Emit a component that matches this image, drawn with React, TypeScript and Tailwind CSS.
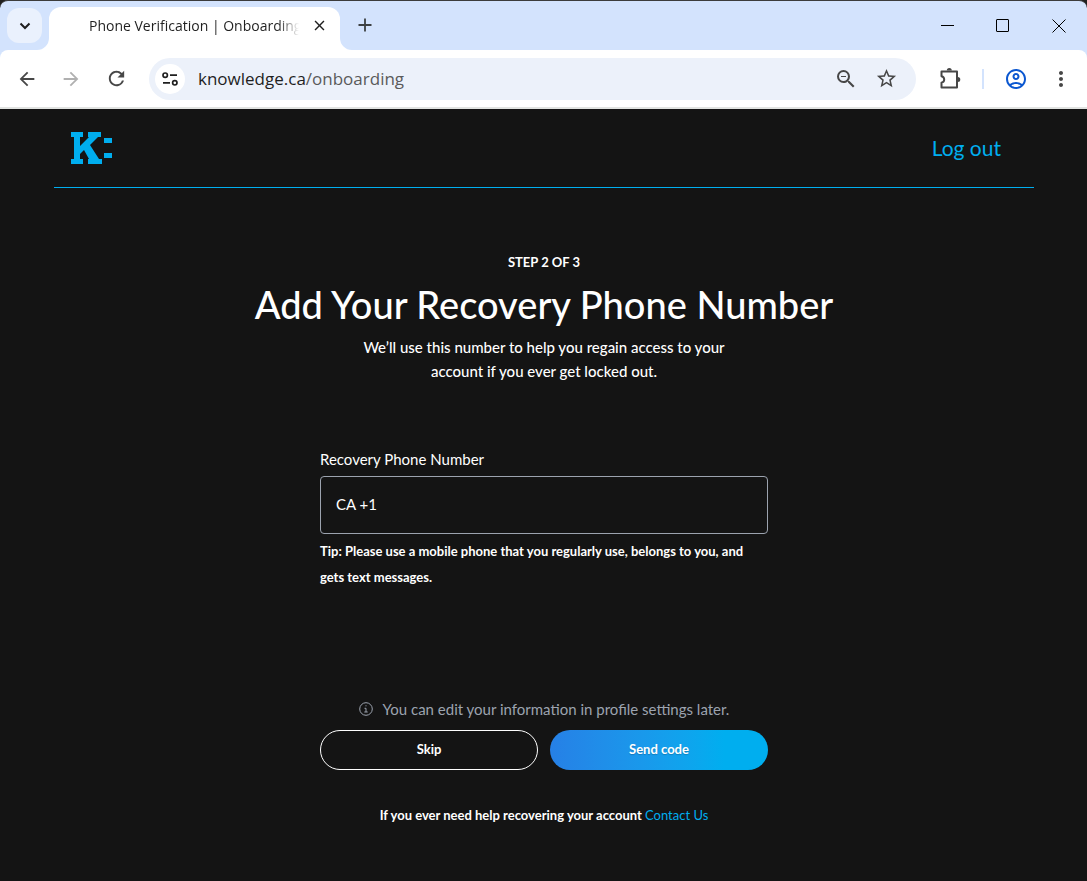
import { ReactNode } from "react";
import {
  MdArrowBack,
  MdArrowForward,
  MdClose,
  MdMoreVert,
  MdOutlineAccountCircle,
  MdOutlineZoomOut,
  MdRefresh,
  MdStarOutline,
} from "react-icons/md";

interface IconButtonProps {
  label: string;
  className?: string;
  children: ReactNode;
}

function IconButton({ label, className = "", children }: IconButtonProps) {
  return (
    <button
      type="button"
      aria-label={label}
      className={`flex shrink-0 items-center justify-center ${className}`}
    >
      {children}
    </button>
  );
}

function TabStrip() {
  return (
    <div className="flex h-[50px] items-start rounded-t-lg border-t border-[#3c3c3c] bg-[#d3e3fd] pl-[7px]">
      <IconButton
        label="Search tabs"
        className="mt-[7px] size-[35px] rounded-xl bg-[#eaf1fd] text-[#1f1f1f]"
      >
        <svg viewBox="0 0 12 8" className="h-[8px] w-[12px]" fill="none">
          <path d="M1.5 1.5 6 6l4.500-4.500" stroke="currentColor" strokeWidth="2" />
        </svg>
      </IconButton>

      {/* Active tab, with the flared corners where it meets the toolbar */}
      <div className="mt-[6px] flex items-end">
        <svg viewBox="0 0 12 12" className="-ml-[5px] size-[12px]" fill="white">
          <path d="M12 0v12H0A12 12 0 0 0 12 0z" />
        </svg>
        <div className="flex h-[43px] w-[291px] items-center rounded-t-xl bg-white pb-[6px] pl-[40px]">
          <div className="w-[210px] overflow-hidden whitespace-nowrap bg-linear-to-r from-[#1f1f1f] from-90% to-transparent bg-clip-text text-[14px] text-transparent">
            Phone Verification | Onboarding
          </div>
          <IconButton label="Close tab" className="ml-[11px] size-[18px] text-[#1f1f1f]">
            <MdClose className="size-[17px]" />
          </IconButton>
        </div>
        <svg viewBox="0 0 12 12" className="size-[12px]" fill="white">
          <path d="M0 0v12h12A12 12 0 0 1 0 0z" />
        </svg>
      </div>

      <IconButton label="New tab" className="mt-[11px] size-[26px] text-[#3c4043]">
        <svg viewBox="0 0 14 14" className="size-[14px]" fill="none">
          <path d="M7 0.500v13M0.500 7h13" stroke="currentColor" strokeWidth="1.800" />
        </svg>
      </IconButton>

      {/* Window controls */}
      <div className="ml-auto flex h-[49px] text-black">
        <IconButton label="Minimize" className="w-[56px]">
          <svg viewBox="0 0 13 13" className="size-[13px]">
            <path d="M0 6.500h13" stroke="currentColor" />
          </svg>
        </IconButton>
        <IconButton label="Maximize" className="w-[56px]">
          <svg viewBox="0 0 14 14" className="size-[14px]" fill="none">
            <rect x="0.500" y="0.500" width="12" height="12" rx="0.500" stroke="currentColor" />
          </svg>
        </IconButton>
        <IconButton label="Close" className="w-[56px]">
          <svg viewBox="0 0 14 14" className="size-[14px]">
            <path d="M0.500 0.500l13 13M13.500 0.500l-13 13" stroke="currentColor" />
          </svg>
        </IconButton>
      </div>
    </div>
  );
}

function Toolbar() {
  return (
    <div className="bg-[#d3e3fd]">
      <div className="flex h-[59px] items-center rounded-t-lg border-b-2 border-[#e1e3e1] bg-white pr-[14px] pl-[16px] text-[#474747]">
        <IconButton label="Back" className="size-[22px]">
          <MdArrowBack className="size-[22px]" />
        </IconButton>
        <IconButton label="Forward" className="ml-[22px] size-[22px] text-[#b0b0b0]">
          <MdArrowForward className="size-[22px]" />
        </IconButton>
        <IconButton label="Reload" className="ml-[23px] size-[23px]">
          <MdRefresh className="size-[23px]" />
        </IconButton>

        {/* Address bar */}
        <div className="ml-[21px] flex h-[42px] min-w-0 flex-1 items-center rounded-full bg-[#ecf1fa] pr-[18px] pl-[6px]">
          <IconButton
            label="View site information"
            className="size-[30px] rounded-full bg-white text-[#1f1f1f]"
          >
            <svg viewBox="0 0 16 14" className="h-[14px] w-[16px]" fill="none" stroke="currentColor" strokeWidth="1.700">
              <circle cx="3.200" cy="3.200" r="2.200" />
              <path d="M8 3.200h7M1 10.800h7" />
              <circle cx="12.800" cy="10.800" r="2.200" />
            </svg>
          </IconButton>
          <div className="ml-[13px] flex-1 text-[17px] text-[#1f1f1f]">
            knowledge.ca<span className="text-[#5a5a5a]">/onboarding</span>
          </div>
          <IconButton label="Zoom" className="size-[24px]">
            <MdOutlineZoomOut className="size-[24px]" />
          </IconButton>
          <IconButton label="Bookmark this tab" className="ml-[16px] size-[24px]">
            <MdStarOutline className="size-[23px]" />
          </IconButton>
        </div>

        <IconButton label="Extensions" className="ml-[22px] size-[24px]">
          <svg viewBox="0 0 24 24" className="size-[24px]">
            <path
              d="M3.500 4.500h15.500v16H3.500v-4.800c3.600-1 3.600-5.400 0-6.400z"
              fill="none"
              stroke="currentColor"
              strokeWidth="2"
              strokeLinejoin="round"
            />
            <path d="M8.800 3.600a2.500 2.500 0 0 1 5 0zM19.800 10a2.500 2.500 0 0 1 0 5z" fill="currentColor" />
          </svg>
        </IconButton>
        <div className="ml-[20px] h-[20px] w-[2px] bg-[#d3e3fd]" />
        <IconButton label="Profile" className="ml-[20px] size-[24px] text-[#0b57d0]">
          <MdOutlineAccountCircle className="size-[24px]" />
        </IconButton>
        <IconButton label="Customize and control" className="ml-[21px] size-[24px]">
          <MdMoreVert className="size-[24px]" />
        </IconButton>
      </div>
    </div>
  );
}

function Logo() {
  return (
    <svg viewBox="0 0 43 34" className="h-[34px] w-[43px]" fill="#00aeef" role="img" aria-label="Knowledge">
      <path d="M1 1h12v5h-3v9l9-9h-1V1h13v5h-3l-8 8 9 14h3v5H18v-5h1l-5-9-4 4v5h3v5H1v-5h3V6H1z" />
      <path d="M34 7h8v5h-8zM34 22h8v5h-8z" />
    </svg>
  );
}

function InfoIcon() {
  return (
    <svg viewBox="0 0 14 14" className="size-[14px]" fill="none" stroke="currentColor">
      <circle cx="7" cy="7" r="6.300" />
      <path d="M5.500 6.300H7v3.700M5.300 10h3.400M6.500 3.800h1" />
    </svg>
  );
}

export default function App() {
  return (
    <div className="flex min-h-screen flex-col bg-[#141414]">
      <header className="bg-[#202020] font-['Open_Sans',sans-serif]">
        <TabStrip />
        <Toolbar />
      </header>

      <main className="flex-1 pr-[53px] pb-[52px] pl-[54px] font-['Lato',sans-serif] text-white">
        <nav className="flex h-[79px] items-center justify-between border-b border-[#00aeef] pr-[33px] pl-[16px]">
          <Logo />
          <a href="#logout" className="text-[21px] text-[#00aeef]">
            Log out
          </a>
        </nav>

        <div className="flex flex-col items-center pt-[64px] text-center">
          <p className="text-[13px] leading-[20px] font-bold">STEP 2 OF 3</p>
          <h1 className="mt-[8px] text-[38px] leading-[48px] font-medium">Add Your Recovery Phone Number</h1>
          <p className="mt-[7px] max-w-[400px] text-[15px] leading-[24px] font-medium">
            We’ll use this number to help you regain access to your account if you ever get locked out.
          </p>
        </div>

        <form className="mx-auto mt-[64px] w-full max-w-[448px]">
          <label htmlFor="phone" className="block text-[15px] leading-[24px]">
            Recovery Phone Number
          </label>
          <input
            id="phone"
            type="tel"
            defaultValue="CA +1"
            className="mt-[5px] block h-[58px] w-full rounded border border-[#9ca3af] bg-transparent px-[15px] pb-[2px] text-[15px]"
          />
          <p className="mt-[4px] text-[13px] leading-[26px] font-bold">
            Tip: Please use a mobile phone that you regularly use, belongs to you, and gets text messages.
          </p>

          <p className="mt-[107px] flex items-center justify-center gap-[10px] text-[15px] leading-[24px] text-[#9ca3af]">
            <InfoIcon />
            You can edit your information in profile settings later.
          </p>
          <div className="mt-[9px] grid grid-cols-2 gap-[12px]">
            <button type="button" className="h-[40px] rounded-full border border-white text-[13px] font-bold">
              Skip
            </button>
            <button
              type="submit"
              className="h-[40px] rounded-full bg-linear-to-r from-[#2680e6] to-[#00aeef] to-80% text-[13px] font-bold text-shadow-xs"
            >
              Send code
            </button>
          </div>
        </form>

        <p className="mt-[35px] text-center text-[13px] leading-[20px] font-bold">
          If you ever need help recovering your account{" "}
          <a href="#contact" className="font-normal text-[#00aeef]">
            Contact Us
          </a>
        </p>
      </main>
    </div>
  );
}
